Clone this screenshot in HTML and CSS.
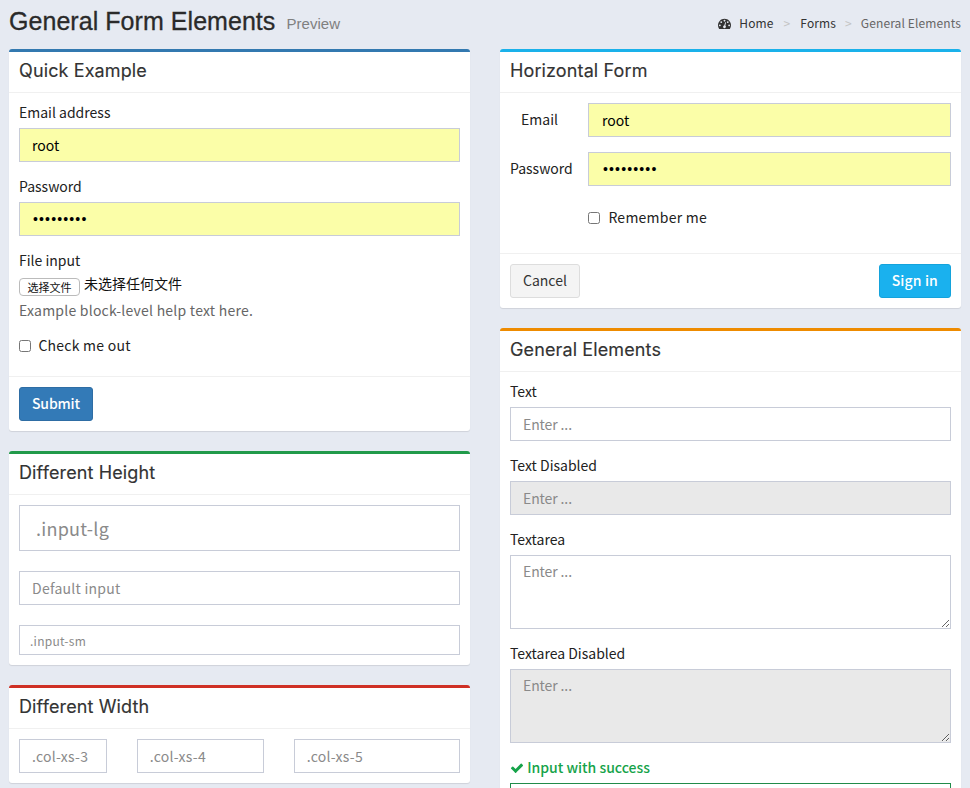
FILE: index.html
```html
<!DOCTYPE html>
<html lang="en">
<head>
  <meta charset="UTF-8">
  <title>General Form Elements</title>
  <link rel="stylesheet" href="styles.css">
</head>
<body>
  <section class="content-header">
    <h1>General Form Elements <small>Preview</small></h1>
    <ol class="breadcrumb">
      <li>
        <svg class="icon-gauge" viewBox="0 0 1792 1792"><path d="M384 1152q0-53-37.5-90.5t-90.5-37.5-90.5 37.5-37.5 90.5 37.5 90.5 90.5 37.5 90.5-37.5 37.5-90.5zm192-448q0-53-37.5-90.5t-90.5-37.5-90.5 37.5-37.5 90.5 37.5 90.5 90.5 37.5 90.5-37.5 37.5-90.5zm428 481l101-382q6-26-7.5-48.5t-38.5-29.5-48 6.5-30 39.5l-101 382q-60 5-107 43.5t-63 98.5q-20 77 20 146t117 89 146-20 89-117q16-60-6-117t-72-91zm660-33q0-53-37.5-90.5t-90.5-37.5-90.5 37.5-37.5 90.5 37.5 90.5 90.5 37.5 90.5-37.5 37.5-90.5zm-640-640q0-53-37.5-90.5t-90.5-37.5-90.5 37.5-37.5 90.5 37.5 90.5 90.5 37.5 90.5-37.5 37.5-90.5zm448 192q0-53-37.5-90.5t-90.5-37.5-90.5 37.5-37.5 90.5 37.5 90.5 90.5 37.5 90.5-37.5 37.5-90.5zm320 448q0 261-141 483-19 29-54 29h-1402q-35 0-54-29-141-221-141-483 0-182 71-348t191-286 286-191 348-71 348 71 286 191 191 286 71 348z"/></svg>
        <a href="#">Home</a>
      </li>
      <li class="sep">&gt;</li>
      <li><a href="#">Forms</a></li>
      <li class="sep sep-last">&gt;</li>
      <li class="active">General Elements</li>
    </ol>
  </section>

  <section class="content">
    <div class="column">
      <div class="box box-primary">
        <div class="box-header"><h3>Quick Example</h3></div>
        <form>
          <div class="box-body">
            <div class="form-group">
              <label>Email address</label>
              <input class="form-control filled" type="email" value="root">
            </div>
            <div class="form-group">
              <label>Password</label>
              <input class="form-control filled" type="password" value="123456789">
            </div>
            <div class="form-group">
              <label>File input</label>
              <div class="file-input">
                <button class="file-btn" type="button">选择文件</button>
                <span>未选择任何文件</span>
              </div>
              <p class="help-block">Example block-level help text here.</p>
            </div>
            <div class="checkbox">
              <label><input type="checkbox"> Check me out</label>
            </div>
          </div>
          <div class="box-footer">
            <button class="btn btn-primary" type="button">Submit</button>
          </div>
        </form>
      </div>

      <div class="box box-success">
        <div class="box-header"><h3>Different Height</h3></div>
        <div class="box-body stack">
          <input class="form-control input-lg" type="text" placeholder=".input-lg">
          <input class="form-control" type="text" placeholder="Default input">
          <input class="form-control input-sm" type="text" placeholder=".input-sm">
        </div>
      </div>

      <div class="box box-danger">
        <div class="box-header"><h3>Different Width</h3></div>
        <div class="box-body">
          <div class="row">
            <div class="col-3"><input class="form-control" type="text" placeholder=".col-xs-3"></div>
            <div class="col-4"><input class="form-control" type="text" placeholder=".col-xs-4"></div>
            <div class="col-5"><input class="form-control" type="text" placeholder=".col-xs-5"></div>
          </div>
        </div>
      </div>
    </div>

    <div class="column">
      <div class="box box-info">
        <div class="box-header"><h3>Horizontal Form</h3></div>
        <form>
          <div class="box-body">
            <div class="form-line">
              <label class="side-label">Email</label>
              <input class="form-control filled" type="email" value="root">
            </div>
            <div class="form-line">
              <label class="side-label">Password</label>
              <input class="form-control filled" type="password" value="123456789">
            </div>
            <div class="form-line remember">
              <div class="checkbox">
                <label><input type="checkbox"> Remember me</label>
              </div>
            </div>
          </div>
          <div class="box-footer split">
            <button class="btn btn-default" type="button">Cancel</button>
            <button class="btn btn-info" type="button">Sign in</button>
          </div>
        </form>
      </div>

      <div class="box box-warning">
        <div class="box-header"><h3>General Elements</h3></div>
        <div class="box-body">
          <div class="form-group">
            <label>Text</label>
            <input class="form-control enter" type="text" placeholder="Enter ...">
          </div>
          <div class="form-group">
            <label>Text Disabled</label>
            <input class="form-control enter" type="text" placeholder="Enter ..." disabled>
          </div>
          <div class="form-group">
            <label>Textarea</label>
            <textarea class="form-control enter" rows="3" placeholder="Enter ..."></textarea>
          </div>
          <div class="form-group">
            <label>Textarea Disabled</label>
            <textarea class="form-control enter" rows="3" placeholder="Enter ..." disabled></textarea>
          </div>
          <div class="form-group has-success">
            <label>
              <svg class="icon-check" viewBox="0 0 1792 1792"><path d="M1671 566q0 40-28 68l-724 724-136 136q-28 28-68 28t-68-28l-136-136-362-362q-28-28-28-68t28-68l136-136q28-28 68-28t68 28l294 295 656-657q28-28 68-28t68 28l136 136q28 28 28 68z"/></svg>
              Input with success
            </label>
            <input class="form-control enter" type="text" placeholder="Enter ...">
          </div>
        </div>
      </div>
    </div>
  </section>
</body>
</html>
```

FILE: styles.css
```css
* {
  box-sizing: border-box;
}

html, body {
  height: 788px;
  overflow: hidden;
}

body {
  margin: 0;
  background: #e6eaf2;
  color: #222;
  font-family: "Noto Sans CJK SC", "Noto Sans", sans-serif;
  font-size: 14px;
  line-height: 20px;
}

.content-header {
  display: flex;
  justify-content: space-between;
  align-items: flex-start;
  height: 49px;
  padding: 7px 9px 0;
}

h1 {
  margin: 0;
  font-family: "Liberation Sans", Arial, sans-serif;
  font-size: 25px;
  font-weight: 400;
  line-height: 28px;
  letter-spacing: 0.05px;
  color: #2a2a2a;
  -webkit-text-stroke: 0.3px #2a2a2a;
}

h1 small {
  margin-left: 4px;
  font-size: 15px;
  color: #808080;
  -webkit-text-stroke: 0;
  vertical-align: 1px;
}

.breadcrumb {
  display: flex;
  gap: 10px;
  margin: 6px 0 0;
  padding: 0;
  list-style: none;
  font-size: 12px;
  letter-spacing: 0.12px;
}

.breadcrumb a {
  color: #333;
  text-decoration: none;
}

.breadcrumb li {
  display: flex;
  align-items: center;
}

.breadcrumb .sep {
  color: #c4c4c4;
}

.breadcrumb .sep-last {
  margin: 0 -1px;
}

.breadcrumb .active {
  color: #666;
}

.icon-gauge {
  width: 13px;
  height: 13px;
  margin-right: 8px;
  fill: #333;
}

.content {
  display: grid;
  grid-template-columns: 461px 461px;
  column-gap: 30px;
  padding: 0 9px;
}

.box {
  margin-bottom: 20px;
  background: #fff;
  border-top: 3px solid #d2d6de;
  border-radius: 3px;
  box-shadow: 0 1px 1px rgba(0, 0, 0, 0.1);
}

.box-primary { border-top-color: #3379b0; }
.box-info { border-top-color: #1ab1ea; }
.box-success { border-top-color: #219a4a; }
.box-danger { border-top-color: #cf3025; }
.box-warning { border-top-color: #ee8b00; }

.box-header {
  height: 41px;
  padding: 9px 10px 0;
  border-bottom: 1px solid #f0f0f0;
}

.box-header h3 {
  margin: 0;
  font-family: Inter, "Liberation Sans", sans-serif;
  font-size: 18px;
  font-weight: 400;
  line-height: 20px;
  letter-spacing: 0.12px;
  color: #333;
  -webkit-text-stroke: 0.15px #333;
}

.box-body {
  padding: 10px;
}

.box-footer {
  padding: 10px;
  border-top: 1px solid #f0f0f0;
}

.split {
  display: flex;
  justify-content: space-between;
}

.form-group {
  margin-bottom: 15px;
}

/* labels sit a pixel higher than the font's default box */
label,
.help-block,
.checkbox {
  line-height: 18px;
}

.form-group > label {
  display: block;
  height: 20px;
  margin-bottom: 5px;
}

.form-control {
  display: block;
  width: 100%;
  height: 34px;
  padding: 6px 12px;
  border: 1px solid #c8ccd8;
  border-radius: 0;
  background: #fff;
  color: #000;
  font-family: inherit;
  font-size: 14px;
  line-height: 20px;
  outline: none;
}

.form-control[type="password"] {
  padding-left: 13px;
  font-family: "Liberation Sans", Arial, sans-serif;
  letter-spacing: 1.15px;
}

.form-control::placeholder {
  color: #8a8a8a;
  letter-spacing: 0.25px;
  opacity: 1;
}

.enter::placeholder {
  letter-spacing: -0.1px;
}

.form-control:disabled {
  background: #e9e9e9;
}

textarea.form-control {
  height: 74px;
  padding-top: 5px;
}

.filled {
  background: #fbfea8;
}

.input-lg {
  height: 46px;
  padding: 10px 16px;
  font-size: 18px;
}

.input-sm {
  height: 30px;
  padding: 5px 10px;
  font-size: 12px;
}

.stack {
  display: flex;
  flex-direction: column;
  gap: 20px;
}

.file-input {
  display: flex;
  align-items: flex-start;
  gap: 4px;
  height: 20px;
}

.file-btn {
  width: 61px;
  height: 18px;
  margin-top: 2px;
  padding: 0;
  border: 1px solid #bbb;
  border-radius: 4px;
  background: #fff;
  color: #111;
  font-family: inherit;
  font-size: 11px;
  line-height: 16px;
}

.file-input span {
  margin-top: -3px;
  color: #111;
}

.help-block {
  height: 20px;
  margin: 5px 0 0;
  color: #666;
  letter-spacing: 0.23px;
}

.checkbox {
  height: 20px;
  margin: 10px 0;
  letter-spacing: 0.25px;
}

.checkbox input {
  width: 12px;
  height: 12px;
  margin: 0 4px 0 0;
  vertical-align: -1px;
}

.form-line {
  display: grid;
  grid-template-columns: 48px 1fr;
  column-gap: 30px;
  margin-bottom: 15px;
}

.form-line .form-control {
  padding-left: 13px;
}

.form-line .form-control[type="password"] {
  padding-left: 14px;
}

.side-label {
  padding-top: 7px;
  text-align: right;
  white-space: nowrap;
}

.remember .checkbox {
  grid-column: 2;
  height: 27px;
  margin: 0;
  padding-top: 7px;
}

.remember .checkbox input {
  margin-right: 5px;
}

.btn {
  height: 34px;
  padding: 5px 12px 7px;
  border: 1px solid transparent;
  border-radius: 3px;
  font-family: inherit;
  font-size: 14px;
  line-height: 20px;
}

.btn-primary {
  background: #337ab7;
  border-color: #2e6da4;
  color: #fff;
  font-weight: 500;
  letter-spacing: -0.15px;
}

.btn-default {
  background: #f4f4f4;
  border-color: #ddd;
  color: #333;
}

.btn-info {
  background: #1ab1ee;
  border-color: #14a3dc;
  color: #fff;
  font-weight: 500;
  letter-spacing: 0.15px;
}

.row {
  display: flex;
  margin: 0 -15px;
}

.col-3 { flex: 0 0 25%; padding: 0 15px; }
.col-4 { flex: 0 0 33.3333%; padding: 0 15px; }
.col-5 { flex: 0 0 41.6667%; padding: 0 15px; }

.has-success label {
  color: #16a34a;
  font-weight: 500;
}

.has-success .form-control {
  border-color: #218c4a;
}

.icon-check {
  width: 14px;
  height: 14px;
  fill: #16a34a;
  vertical-align: -2px;
}
```
